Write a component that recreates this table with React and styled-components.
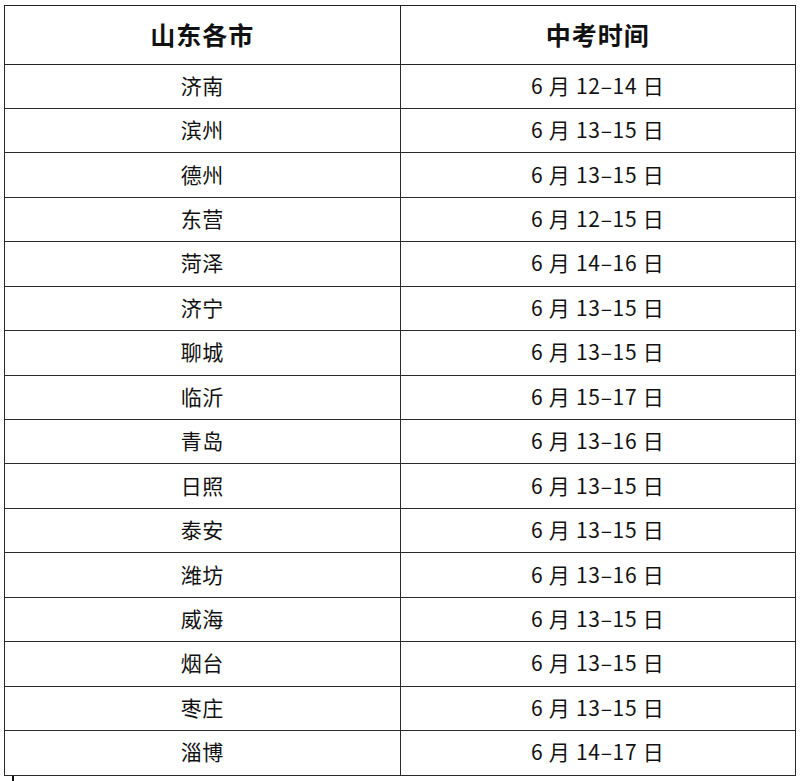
import React from 'react';
import styled, { createGlobalStyle } from 'styled-components';

const GlobalStyle = createGlobalStyle`
  html, body {
    margin: 0;
    padding: 0;
    background: #fff;
  }
  body {
    font-family: "Noto Sans CJK SC", "Noto Sans", sans-serif;
    color: #111;
  }
`;

const Page = styled.div`
  width: 800px;
  height: 781px;
  padding: 5px 0 0 4px;
  box-sizing: border-box;
  position: relative;
  overflow: hidden;
`;

const Table = styled.table`
  width: 792px;
  border-collapse: collapse;
  table-layout: fixed;
  border: 1.5px solid #222;
`;

const HeadCell = styled.th`
  height: 55.5px;
  padding: 0 0 2px;
  border: 1.5px solid #222;
  font-size: 25px;
  font-weight: 700;
  text-align: center;
  vertical-align: middle;
  letter-spacing: 1px;
`;

const Row = styled.tr`
  height: 44.45px;
`;

const Cell = styled.td`
  padding: 0 0 3px;
  border: 1.5px solid #2a2a2a;
  font-size: 21px;
  text-align: center;
  vertical-align: middle;
  letter-spacing: ${(p) => (p.$date ? '0.7px' : '0.5px')};
`;

const Tick = styled.div`
  position: absolute;
  left: 12px;
  top: 776px;
  width: 2px;
  height: 6px;
  background: #111;
`;

const rows = [
  ['济南', '6 月 12–14 日'],
  ['滨州', '6 月 13–15 日'],
  ['德州', '6 月 13–15 日'],
  ['东营', '6 月 12–15 日'],
  ['菏泽', '6 月 14–16 日'],
  ['济宁', '6 月 13–15 日'],
  ['聊城', '6 月 13–15 日'],
  ['临沂', '6 月 15–17 日'],
  ['青岛', '6 月 13–16 日'],
  ['日照', '6 月 13–15 日'],
  ['泰安', '6 月 13–15 日'],
  ['潍坊', '6 月 13–16 日'],
  ['威海', '6 月 13–15 日'],
  ['烟台', '6 月 13–15 日'],
  ['枣庄', '6 月 13–15 日'],
  ['淄博', '6 月 14–17 日'],
];

export default function App() {
  return (
    <>
      <GlobalStyle />
      <Page>
        <Table>
          <thead>
            <tr>
              <HeadCell>山东各市</HeadCell>
              <HeadCell>中考时间</HeadCell>
            </tr>
          </thead>
          <tbody>
            {rows.map(([city, date]) => (
              <Row key={city}>
                <Cell>{city}</Cell>
                <Cell $date>{date}</Cell>
              </Row>
            ))}
          </tbody>
        </Table>
        <Tick />
      </Page>
    </>
  );
}
